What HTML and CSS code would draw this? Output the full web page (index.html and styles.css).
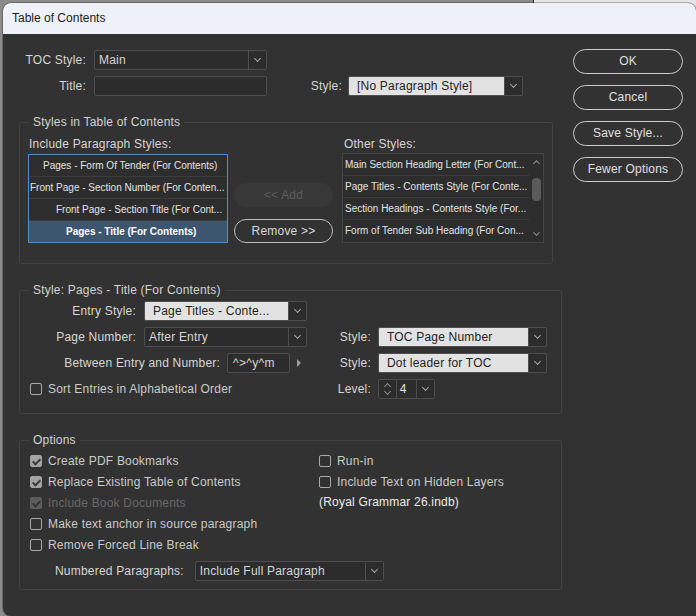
FILE: index.html
```html
<!DOCTYPE html>
<html>
<head>
    <meta charset="utf-8" />
    <title>Table of Contents</title>
    <link rel="stylesheet" href="styles.css">
</head>
<body>
    <div class="window">
        <div class="titlebar">Table of Contents</div>
        <div class="body">
            <div class="main">
                <div class="top-grid">
                    <div class="lbl">TOC Style:</div>
                    <div class="select dark"><span class="val">Main</span><span class="chev"></span></div>
                    <div></div>
                    <div></div>
                    <div class="lbl">Title:</div>
                    <div class="input"></div>
                    <div class="lbl lbl2">Style:</div>
                    <div class="select light"><span class="val">[No Paragraph Style]</span><span class="chev"></span></div>
                </div>

                <fieldset class="group g1">
                    <legend>Styles in Table of Contents</legend>
                    <div class="styles-row">
                        <div class="col-left">
                            <div class="list-label">Include Paragraph Styles:</div>
                            <div class="list incl">
                                <div class="row" style="padding-left: 14px">Pages - Form Of Tender (For Contents)</div>
                                <div class="row" style="padding-left: 1px">Front Page - Section Number (For Conten...</div>
                                <div class="row" style="padding-left: 27px">Front Page - Section Title (For Cont...</div>
                                <div class="row sel" style="padding-left: 37px">Pages - Title (For Contents)</div>
                            </div>
                        </div>
                        <div class="col-mid">
                            <div class="pill disabled">&lt;&lt; Add</div>
                            <div class="pill">Remove &gt;&gt;</div>
                        </div>
                        <div class="col-right">
                            <div class="list-label">Other Styles:</div>
                            <div class="list other">
                                <div class="rows">
                                    <div class="row">Main Section Heading Letter (For Cont...</div>
                                    <div class="row">Page Titles - Contents Style (For Conte...</div>
                                    <div class="row">Section Headings - Contents Style (For...</div>
                                    <div class="row">Form of Tender Sub Heading (For Con...</div>
                                </div>
                                <div class="scroll">
                                    <span class="arr up"></span>
                                    <span class="thumb"></span>
                                    <span class="arr down"></span>
                                </div>
                            </div>
                        </div>
                    </div>
                </fieldset>

                <fieldset class="group g2">
                    <legend>Style: Pages - Title (For Contents)</legend>
                    <div class="entry-grid">
                        <div class="cell">
                            <div class="lbl w124">Entry Style:</div>
                            <div class="select light w163"><span class="val">Page Titles - Conte...</span><span class="chev"></span></div>
                        </div>
                        <div class="cell"></div>

                        <div class="cell">
                            <div class="lbl w124">Page Number:</div>
                            <div class="select dark w163"><span class="val">After Entry</span><span class="chev"></span></div>
                        </div>
                        <div class="cell">
                            <div class="lbl w71">Style:</div>
                            <div class="select light w169"><span class="val">TOC Page Number</span><span class="chev"></span></div>
                        </div>

                        <div class="cell">
                            <div class="lbl w207">Between Entry and Number:</div>
                            <div class="input w63"><span class="val">^&gt;^y^m</span></div>
                            <span class="tri"></span>
                        </div>
                        <div class="cell">
                            <div class="lbl w71">Style:</div>
                            <div class="select light w169"><span class="val">Dot leader for TOC</span><span class="chev"></span></div>
                        </div>

                        <div class="cell">
                            <label class="check"><span class="box"></span>Sort Entries in Alphabetical Order</label>
                        </div>
                        <div class="cell">
                            <div class="lbl w71">Level:</div>
                            <div class="spinner">
                                <span class="spin"><span class="arr up"></span><span class="arr down"></span></span>
                                <span class="num">4</span>
                                <span class="chev"></span>
                            </div>
                        </div>
                    </div>
                </fieldset>

                <fieldset class="group g3">
                    <legend>Options</legend>
                    <div class="opt-grid">
                        <label class="check"><span class="box on"></span>Create PDF Bookmarks</label>
                        <label class="check"><span class="box"></span>Run-in</label>
                        <label class="check"><span class="box on"></span>Replace Existing Table of Contents</label>
                        <label class="check"><span class="box"></span>Include Text on Hidden Layers</label>
                        <label class="check off"><span class="box on"></span>Include Book Documents</label>
                        <div class="book">(Royal Grammar 26.indb)</div>
                        <label class="check"><span class="box"></span>Make text anchor in source paragraph</label>
                        <div></div>
                        <label class="check"><span class="box"></span>Remove Forced Line Break</label>
                        <div></div>
                    </div>
                    <div class="numbered">
                        <div class="lbl">Numbered Paragraphs:</div>
                        <div class="select dark w189"><span class="val">Include Full Paragraph</span><span class="chev"></span></div>
                    </div>
                </fieldset>
            </div>

            <div class="buttons">
                <div class="btn">OK</div>
                <div class="btn">Cancel</div>
                <div class="btn">Save Style...</div>
                <div class="btn">Fewer Options</div>
            </div>
        </div>
    </div>
</body>
</html>
```

FILE: styles.css
```css
* { box-sizing: border-box; }
html, body { margin: 0; height: 100%; }
body { background: linear-gradient(to right, #8b8b8b 533px, #2a2a2a 533px, #2a2a2a 534px, #e6e6e6 534px); font-family: "Liberation Sans", Arial, sans-serif; font-size: 12px; letter-spacing: .2px; color: #d6d6d6; overflow: hidden; }

.window { margin: 3px 0 0 3px; height: 613px; background: #323232; border-radius: 8px 8px 0 8px; overflow: hidden; box-shadow: 0 0 0 1px rgba(0,0,0,.25); }
.titlebar { height: 31px; line-height: 31px; padding-left: 9px; background: #eef2f8; color: #1b1b1b; font-size: 12px; letter-spacing: 0; }
.body { display: flex; padding: 15px 0 0 16px; }
.main { width: 543px; }

/* top fields */
.top-grid { display: grid; grid-template-columns: 75px 173px 81px 175px; grid-auto-rows: 20px; row-gap: 6px; margin-top: 1px; }
.lbl { line-height: 20px; text-align: right; padding-right: 8px; white-space: nowrap; }
.lbl2 { padding-right: 6px; }

.select, .input { height: 20px; border: 1px solid #4e4e4e; border-radius: 2px; display: flex; align-items: center; background: #2c2c2c; }
.select .val, .input .val { flex: 1; padding-left: 4px; white-space: nowrap; overflow: hidden; }
.select.light { background: #e2e2e2; color: #1e1e1e; }
.select.light .val { padding-left: 8px; }
.chev { width: 18px; height: 100%; border-left: 1px solid #4e4e4e; background: #2c2c2c; display: flex; align-items: center; justify-content: center; }
.chev::before { content: ""; width: 4px; height: 4px; border-right: 1px solid #a8a8a8; border-bottom: 1px solid #a8a8a8; transform: rotate(45deg); margin-top: -3px; }

/* group boxes */
.group { margin: 0; padding: 0 8px; border: 1px solid #434343; border-radius: 3px; min-width: 0; }
.group legend { padding: 0 4px; margin-left: 1px; line-height: 14px; color: #d2d2d2; }
.g1 { width: 534px; margin-top: 19px; padding-top: 8px; padding-bottom: 20px; }
.g2 { width: 543px; margin-top: 19px; padding-top: 4px; padding-bottom: 14px; }
.g3 { width: 543px; margin-top: 19px; padding-top: 3px; padding-bottom: 8px; }

.styles-row { display: flex; }
.col-left { width: 200px; }
.col-mid { width: 99px; margin-left: 6px; padding-top: 46px; }
.col-right { width: 202px; margin-left: 9px; }
.list-label { line-height: 14px; padding-left: 1px; margin-bottom: 3px; white-space: nowrap; }
.col-right .list-label { padding-left: 2px; margin-bottom: 2px; }

.list { border: 1px solid #454545; background: #2d2d2d; font-size: 10px; letter-spacing: 0; color: #e4e4e4; }
.list .row { height: 22px; line-height: 21px; border-bottom: 1px solid #3c3c3c; white-space: nowrap; overflow: hidden; }
.list .row:last-child { border-bottom: 0; height: 21px; }
.list.incl { border-color: #4f8fd0; height: 89px; }
.list.incl .row.sel { background: #3c566f; color: #fff; font-weight: bold; }
.list.other { display: flex; height: 90px; }
.list.other .rows { flex: 1; }
.list.other .row { padding-left: 2px; }
.scroll { width: 14px; display: flex; flex-direction: column; align-items: center; padding: 4px 0; }
.scroll .thumb { width: 9px; height: 23px; background: #5b5b5b; border-radius: 4px; margin-top: 12px; }
.scroll .down { margin-top: auto; }
.arr { width: 5px; height: 5px; border-left: 1px solid #8a8a8a; border-top: 1px solid #8a8a8a; }
.arr.up { transform: rotate(45deg); margin-top: 3px; }
.arr.down { transform: rotate(225deg); margin-bottom: 3px; }

.pill { height: 24px; line-height: 22px; border: 1px solid #bdbdbd; border-radius: 12px; text-align: center; color: #d8d8d8; }
.pill.disabled { border-color: transparent; background: #383838; color: #5c5c5c; margin-bottom: 12px; }

/* entry style */
.entry-grid { display: grid; grid-template-columns: 287px 1fr; grid-auto-rows: 20px; row-gap: 6px; margin-left: -8px; }
.cell { display: flex; align-items: center; }
.w124 { width: 124px; }
.w207 { width: 207px; padding-right: 7px; }
.w71 { width: 71px; padding-right: 7px; }
.w163 { width: 163px; }
.w169 { width: 169px; }
.w63 { width: 63px; }
.w189 { width: 189px; }
.input.w63 .val { padding-left: 5px; letter-spacing: .3px; }
.tri { width: 0; height: 0; border-top: 4px solid transparent; border-bottom: 4px solid transparent; border-left: 4px solid #9a9a9a; margin-left: 7px; }
.entry-grid .check { padding-left: 10px; }

.spinner { height: 20px; width: 57px; border: 1px solid #4e4e4e; border-radius: 2px; display: flex; background: #2c2c2c; }
.spin { width: 18px; border-right: 1px solid #4e4e4e; display: flex; flex-direction: column; align-items: center; justify-content: space-between; padding: 2px 0; }
.spin .arr.up { margin-top: 2px; }
.spin .arr.down { margin-bottom: 2px; }
.num { width: 20px; line-height: 18px; padding-left: 3px; color: #e6e6e6; }

/* checkboxes */
.check { display: flex; align-items: center; color: #cacaca; white-space: nowrap; }
.box { width: 12px; height: 12px; border: 1px solid #a9a9a9; border-radius: 2px; margin-right: 6px; position: relative; flex: none; }
.box.on { background: #a3a3a3; border-color: #a3a3a3; }
.box.on::after { content: ""; position: absolute; left: 3px; top: 1px; width: 3px; height: 6px; border-right: 2px solid #3a3a3a; border-bottom: 2px solid #3a3a3a; transform: rotate(45deg); }
.check.off { color: #686868; }
.check.off .box { background: #5c5c5c; border-color: #5c5c5c; }
.check.off .box::after { border-color: #353535; }

.opt-grid { display: grid; grid-template-columns: 289px 1fr; grid-auto-rows: 21px; padding-left: 2px; }
.book { line-height: 21px; color: #ececec; }
.numbered { display: flex; align-items: center; margin-top: 6px; padding-left: 27px; }
.numbered .lbl { padding-right: 11px; }

/* right buttons */
.buttons { width: 110px; margin-left: 11px; display: flex; flex-direction: column; gap: 11px; }
.btn { height: 25px; line-height: 23px; border: 1px solid #cdcdcd; border-radius: 13px; text-align: center; color: #e0e0e0; }
```
